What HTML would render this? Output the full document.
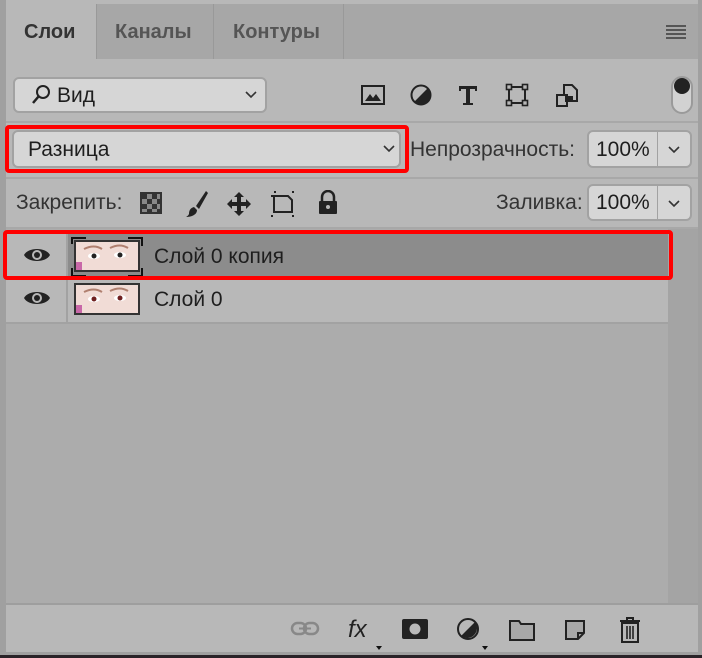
<!DOCTYPE html>
<html><head><meta charset="utf-8"><style>
*{margin:0;padding:0;box-sizing:border-box}
body{width:702px;height:658px;background:#2a2328;position:relative;overflow:hidden;font-family:"Liberation Sans",sans-serif;color:#1e1e1e}
.a{position:absolute}
.box{position:absolute;background:#d6d6d6;border:2px solid #a2a2a2;border-radius:6px}
.t{position:absolute;font-size:21px;white-space:nowrap}
svg{position:absolute}
</style></head><body>
<div class="a" style="left:0;top:0;width:702px;height:655px;background:#a0a0a0"></div>
<div class="a" style="left:6px;top:0;width:692px;height:652px;background:#b8b8b8"></div>
<!-- tab bar -->
<div class="a" style="left:6px;top:4px;width:692px;height:55px;background:#a7a7a7"></div>
<div class="a" style="left:6px;top:4px;width:90px;height:56px;background:#b8b8b8"></div>
<div class="a" style="left:96px;top:4px;width:1px;height:55px;background:#999"></div>
<div class="a" style="left:213px;top:4px;width:1px;height:55px;background:#999"></div>
<div class="a" style="left:343px;top:4px;width:1px;height:55px;background:#999"></div>
<div class="t" style="left:24px;top:21px;font-size:20px;font-weight:bold;color:#333">Слои</div>
<div class="t" style="left:115px;top:21px;font-size:20px;font-weight:bold;color:#555">Каналы</div>
<div class="t" style="left:233px;top:21px;font-size:20px;font-weight:bold;color:#555">Контуры</div>
<div class="a" style="left:666px;top:25px;width:20px;height:2px;background:#555;box-shadow:0 4px #555,0 8px #555,0 12px #555"></div>
<!-- filter row -->
<div class="box" style="left:13px;top:77px;width:254px;height:36px"></div>
<svg style="left:30px;top:84px" width="22" height="22" viewBox="0 0 22 22"><circle cx="13" cy="8" r="6" fill="none" stroke="#222" stroke-width="2"/><path d="M8.5 12.5L3 19" stroke="#222" stroke-width="2.5"/></svg>
<div class="t" style="left:57px;top:84px">Вид</div>
<svg style="left:244px;top:90px" width="14" height="10"><path d="M2 2l5 5 5-5" fill="none" stroke="#333" stroke-width="1.6"/></svg>
<svg style="left:360px;top:83px" width="26" height="24" viewBox="0 0 26 24"><rect x="2" y="3" width="22" height="18" fill="none" stroke="#222" stroke-width="2"/><path d="M5 18l5-7 3 4 3-4 5 7z" fill="#222"/></svg>
<svg style="left:409px;top:83px" width="24" height="24" viewBox="0 0 24 24"><circle cx="12" cy="12" r="9.5" fill="none" stroke="#222" stroke-width="2"/><path d="M18.7 5.3A9.5 9.5 0 0 1 5.3 18.7z" fill="#222"/></svg>
<svg style="left:457px;top:84px" width="22" height="22" viewBox="0 0 22 22"><path d="M2 2h18v5h-2V5h-5v14h3v2H6v-2h3V5H4v2H2z" fill="#222"/></svg>
<svg style="left:505px;top:83px" width="24" height="24" viewBox="0 0 24 24"><rect x="4" y="4" width="16" height="16" fill="none" stroke="#222" stroke-width="2"/><g fill="#b8b8b8" stroke="#222" stroke-width="1.6"><rect x="1.5" y="1.5" width="5" height="5"/><rect x="17.5" y="1.5" width="5" height="5"/><rect x="1.5" y="17.5" width="5" height="5"/><rect x="17.5" y="17.5" width="5" height="5"/></g></svg>
<svg style="left:555px;top:83px" width="24" height="26" viewBox="0 0 24 26"><path d="M9 2h8l5 5v11H9z" fill="none" stroke="#222" stroke-width="2"/><rect x="2" y="12" width="10" height="11" fill="#b8b8b8" stroke="#222" stroke-width="2"/><rect x="10" y="13" width="8" height="6" fill="#222"/></svg>
<div class="a" style="left:671px;top:76px;width:22px;height:38px;border:2px solid #9a9a9a;border-radius:11px;background:#d2d2d2"></div>
<div class="a" style="left:674px;top:78px;width:16px;height:16px;border-radius:50%;background:#222"></div>
<div class="a" style="left:6px;top:121px;width:692px;height:2px;background:#a8a8a8"></div>
<!-- blend row -->
<div class="box" style="left:12px;top:130px;width:389px;height:38px"></div>
<div class="a" style="left:5px;top:125px;width:404px;height:48px;border:4px solid #f00;border-radius:4px"></div>
<div class="t" style="left:28px;top:138px">Разница</div>
<svg style="left:382px;top:144px" width="14" height="10"><path d="M2 2l5 5 5-5" fill="none" stroke="#333" stroke-width="1.6"/></svg>
<div class="t" style="left:410px;top:138px;color:#333">Непрозрачность:</div>
<div class="box" style="left:587px;top:130px;width:105px;height:38px"></div>
<div class="a" style="left:657px;top:131px;width:1px;height:36px;background:#a2a2a2"></div>
<div class="t" style="left:596px;top:138px">100%</div>
<svg style="left:667px;top:145px" width="14" height="10"><path d="M2 2l5 5 5-5" fill="none" stroke="#333" stroke-width="1.6"/></svg>
<div class="a" style="left:6px;top:177px;width:692px;height:2px;background:#a8a8a8"></div>
<!-- lock row -->
<div class="t" style="left:16px;top:191px;color:#333">Закрепить:</div>
<svg style="left:140px;top:192px" width="22" height="22" viewBox="0 0 22 22"><rect x="1" y="1" width="20" height="20" fill="#888" stroke="#333" stroke-width="2"/><g fill="#333"><rect x="2" y="2" width="5" height="5"/><rect x="12" y="2" width="5" height="5"/><rect x="7" y="7" width="5" height="5"/><rect x="2" y="12" width="5" height="5"/><rect x="12" y="12" width="5" height="5"/><rect x="7" y="17" width="5" height="4"/><rect x="17" y="7" width="4" height="5"/><rect x="17" y="17" width="4" height="4"/></g></svg>
<svg style="left:184px;top:189px" width="26" height="30" viewBox="0 0 26 30"><path d="M22 2L12 17l3 3L24 4z" fill="#222"/><path d="M10 18c-4 1-5 4-5 7-1 2-3 3-3 3 5 0 11-2 11-7z" fill="#222"/></svg>
<svg style="left:226px;top:191px" width="26" height="26" viewBox="0 0 26 26"><path d="M13 1l5 5h-3v5h5V8l5 5-5 5v-3h-5v5h3l-5 5-5-5h3v-5H6v3l-5-5 5-5v3h5V6H8z" fill="#222"/></svg>
<svg style="left:270px;top:190px" width="28" height="28" viewBox="0 0 28 28"><path d="M4 6h14l4 4v12H4z" fill="none" stroke="#222" stroke-width="2"/><g fill="#222"><rect x="1" y="5" width="2" height="2"/><rect x="22" y="1" width="2" height="2"/><rect x="22" y="25" width="2" height="2"/><rect x="1" y="25" width="2" height="2"/><rect x="4" y="1" width="2" height="2"/></g></svg>
<svg style="left:317px;top:190px" width="22" height="26" viewBox="0 0 22 26"><path d="M5 11V7a6 6 0 0 1 12 0v4" fill="none" stroke="#222" stroke-width="2.5"/><rect x="2" y="11" width="18" height="13" rx="1" fill="#222"/><circle cx="11" cy="17" r="2" fill="#b8b8b8"/></svg>
<div class="t" style="left:496px;top:191px;color:#333">Заливка:</div>
<div class="box" style="left:587px;top:184px;width:105px;height:37px"></div>
<div class="a" style="left:657px;top:185px;width:1px;height:35px;background:#a2a2a2"></div>
<div class="t" style="left:596px;top:191px">100%</div>
<svg style="left:667px;top:199px" width="14" height="10"><path d="M2 2l5 5 5-5" fill="none" stroke="#333" stroke-width="1.6"/></svg>
<div class="a" style="left:6px;top:227px;width:692px;height:2px;background:#a8a8a8"></div>
<!-- list -->
<div class="a" style="left:6px;top:229px;width:662px;height:374px;background:#acacac"></div>
<div class="a" style="left:668px;top:229px;width:30px;height:374px;background:#a4a4a4"></div>
<div class="a" style="left:6px;top:233px;width:662px;height:46px;background:#b8b8b8"></div>
<div class="a" style="left:67px;top:233px;width:601px;height:46px;background:#8c8c8c"></div>
<div class="a" style="left:6px;top:279px;width:662px;height:43px;background:#b8b8b8"></div>
<div class="a" style="left:6px;top:322px;width:662px;height:2px;background:#a2a2a2"></div>
<div class="a" style="left:66px;top:233px;width:2px;height:90px;background:#a2a2a2"></div>
<div class="a" style="left:6px;top:278px;width:662px;height:2px;background:#a2a2a2"></div>
<svg style="left:23px;top:246px" width="28" height="18" viewBox="0 0 28 18"><path d="M1 9C5 1 23 1 27 9 23 17 5 17 1 9z" fill="#222"/><circle cx="14" cy="9" r="5" fill="#b8b8b8"/><circle cx="14" cy="9" r="3" fill="#222"/></svg>
<svg style="left:23px;top:289px" width="28" height="18" viewBox="0 0 28 18"><path d="M1 9C5 1 23 1 27 9 23 17 5 17 1 9z" fill="#222"/><circle cx="14" cy="9" r="5" fill="#b8b8b8"/><circle cx="14" cy="9" r="3" fill="#222"/></svg>
<svg style="left:70px;top:236px" width="74" height="42" viewBox="0 0 74 42"><path d="M2 8V2h14M58 2h14v8M2 32v8h14M58 40h14v-8" fill="none" stroke="#111" stroke-width="2"/><rect x="5" y="5" width="64" height="30" fill="#f1dcd6" stroke="#333" stroke-width="2"/><rect x="6" y="26" width="6" height="8" fill="#c868a8"/><ellipse cx="24" cy="20" rx="6" ry="3" fill="#fff"/><circle cx="24" cy="20" r="2.5" fill="#222"/><ellipse cx="50" cy="19" rx="6" ry="3" fill="#fff"/><circle cx="50" cy="19" r="2.5" fill="#222"/><path d="M14 13q10-5 18 0M40 12q10-5 18 0" stroke="#b08070" stroke-width="2" fill="none"/></svg>
<div class="t" style="left:154px;top:245px">Слой 0 копия</div>
<svg style="left:74px;top:283px" width="66" height="32" viewBox="0 0 66 32"><rect x="1" y="1" width="64" height="30" fill="#f1dcd6" stroke="#333" stroke-width="2"/><rect x="2" y="22" width="6" height="8" fill="#c868a8"/><ellipse cx="20" cy="16" rx="6" ry="3" fill="#fff"/><circle cx="20" cy="16" r="2.5" fill="#702020"/><ellipse cx="46" cy="15" rx="6" ry="3" fill="#fff"/><circle cx="46" cy="15" r="2.5" fill="#702020"/><path d="M10 9q10-5 18 0M36 8q10-5 18 0" stroke="#b08070" stroke-width="2" fill="none"/></svg>
<div class="t" style="left:154px;top:288px">Слой 0</div>
<div class="a" style="left:3px;top:230px;width:670px;height:50px;border:4px solid #f00;border-radius:4px"></div>
<!-- bottom bar -->
<div class="a" style="left:6px;top:603px;width:692px;height:2px;background:#9e9e9e"></div>
<svg style="left:290px;top:620px" width="30" height="18" viewBox="0 0 30 18"><rect x="2" y="3" width="14" height="11" rx="5.5" fill="none" stroke="#888" stroke-width="2.5"/><rect x="14" y="3" width="14" height="11" rx="5.5" fill="none" stroke="#888" stroke-width="2.5"/><rect x="9" y="7.5" width="12" height="2" fill="#888"/></svg>
<div class="t" style="left:348px;top:616px;font-style:italic;font-size:24px;color:#222">fx</div>
<div class="a" style="left:376px;top:646px;width:0;height:0;border-left:3px solid transparent;border-right:3px solid transparent;border-top:4px solid #111"></div>
<svg style="left:401px;top:618px" width="28" height="22" viewBox="0 0 28 22"><rect x="1" y="1" width="26" height="20" rx="2" fill="#222"/><circle cx="14" cy="11" r="5.5" fill="#b8b8b8"/></svg>
<svg style="left:456px;top:617px" width="24" height="24" viewBox="0 0 24 24"><circle cx="12" cy="12" r="10" fill="none" stroke="#222" stroke-width="2"/><path d="M19 5A10 10 0 0 1 5 19z" fill="#222"/></svg>
<div class="a" style="left:482px;top:646px;width:0;height:0;border-left:3px solid transparent;border-right:3px solid transparent;border-top:4px solid #111"></div>
<svg style="left:509px;top:619px" width="26" height="22" viewBox="0 0 26 22"><path d="M1 2h9l2 3h13v16H1z" fill="#a8a8a8" stroke="#222" stroke-width="2"/></svg>
<svg style="left:564px;top:619px" width="22" height="22" viewBox="0 0 22 22"><path d="M2 2h18v12l-6 6H2z" fill="#a8a8a8" stroke="#222" stroke-width="2"/><path d="M20 14h-6v6" fill="none" stroke="#222" stroke-width="2"/></svg>
<svg style="left:618px;top:616px" width="24" height="28" viewBox="0 0 24 28"><path d="M2 5h20M9 5V2h6v3" fill="none" stroke="#222" stroke-width="2"/><rect x="4" y="7" width="16" height="19" fill="none" stroke="#222" stroke-width="2"/><path d="M9 10v13M12 10v13M15 10v13" stroke="#222" stroke-width="1.6"/></svg>
</body></html>
